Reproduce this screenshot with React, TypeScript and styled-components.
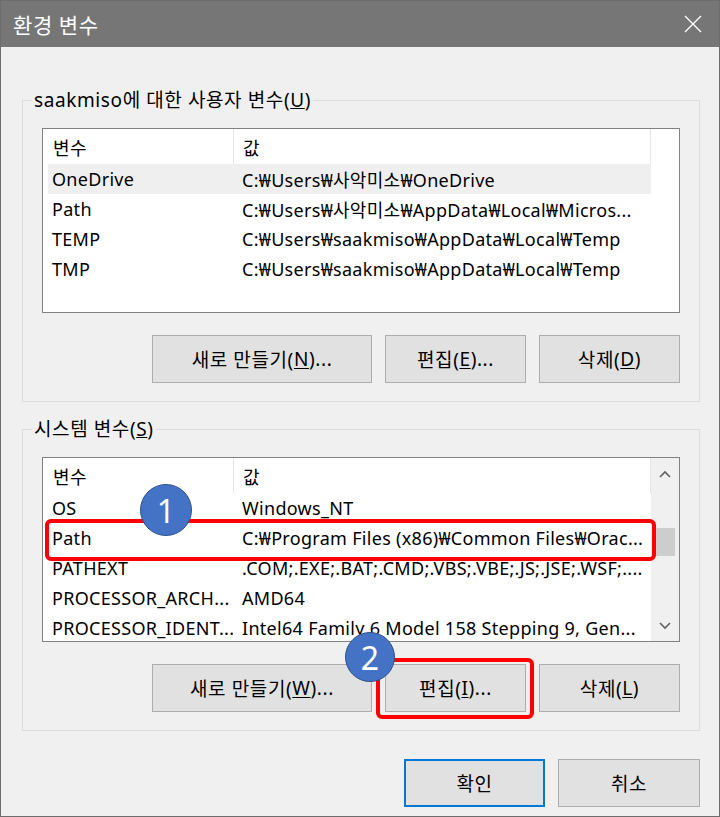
import React from 'react';
import styled, { createGlobalStyle } from 'styled-components';

const Global = createGlobalStyle`
  html, body { margin: 0; padding: 0; background: #f0f0f0; }
  body { font-family: "Noto Sans", "Noto Sans CJK KR", sans-serif; color: #000; }
  * { box-sizing: border-box; }
`;

const Window = styled.div`
  position: relative;
  width: 720px;
  height: 817px;
  background: #f0f0f0;
  border: 1px solid #6d6d6d;
  display: flex;
  flex-direction: column;
  overflow: hidden;
`;

const TitleBar = styled.div`
  height: 46px;
  flex: none;
  background: #767676;
  color: #fff;
  display: flex;
  align-items: center;
  justify-content: space-between;
  padding: 0 17px 0 12px;
  font-size: 21px;
  letter-spacing: 0.8px;
  font-family: "Noto Sans CJK KR", sans-serif;
`;

const Body = styled.div`
  display: flex;
  flex-direction: column;
  padding: 0 19px 0 21px;
`;

const Group = styled.fieldset<{ $top: number }>`
  margin: ${p => p.$top}px 0 0 0;
  padding: 16px 19px 18px 19px;
  border: 1px solid #dcdcdc;
  min-width: 0;
`;

const Legend = styled.legend`
  margin-left: -10px;
  padding: 0 2px;
  font-size: 19px;
  letter-spacing: 0.6px;
  line-height: 24px;
`;

const ListBox = styled.div`
  height: 185px;
  border: 1px solid #828282;
  background: #fff;
  display: flex;
  overflow: hidden;
`;

const ListMain = styled.div`
  width: 608px;
  flex: none;
  display: flex;
  flex-direction: column;
`;

const Header = styled.div`
  display: flex;
  height: 35px;
  flex: none;
`;

const HeaderCell = styled.div<{ $w: number; $pl: number }>`
  width: ${p => p.$w}px;
  padding-left: ${p => p.$pl}px;
  border-right: 1px solid #e5e5e5;
  display: flex;
  align-items: center;
  font-size: 18px;
  letter-spacing: 0.5px;
`;

const Row = styled.div<{ $sel?: boolean }>`
  display: flex;
  height: 30px;
  flex: none;
  margin-left: 5px;
  width: 603px;
  align-items: center;
  background: ${p => (p.$sel ? '#efefef' : 'transparent')};
  font-size: 18px;
  letter-spacing: 0.3px;
  white-space: nowrap;
`;

const NameCell = styled.div`
  width: 185px;
  padding-left: 4px;
  overflow: hidden;
  flex: none;
`;

const ValueCell = styled.div`
  padding-left: 9px;
  overflow: hidden;
  flex: 1;
`;

const ScrollBar = styled.div`
  flex: 1;
  background: #f0f0f0;
  display: flex;
  flex-direction: column;
  align-items: flex-start;
`;

const ArrowBox = styled.div`
  width: 100%;
  height: 31px;
  display: flex;
  align-items: center;
  justify-content: center;
  flex: none;
`;

const Track = styled.div`
  flex: 1;
  width: 100%;
  padding-top: 39px;
`;

const Thumb = styled.div`
  margin-left: 5px;
  width: 19px;
  height: 28px;
  background: #cdcdcd;
`;

const ButtonRow = styled.div<{ $mt: number }>`
  display: flex;
  justify-content: flex-end;
  gap: 13px;
  margin-top: ${p => p.$mt}px;
`;

const Button = styled.div<{ $w: number; $default?: boolean }>`
  width: ${p => p.$w}px;
  height: 48px;
  background: #e1e1e1;
  border: ${p => (p.$default ? '2px solid #0078d7' : '1px solid #adadad')};
  display: flex;
  align-items: center;
  justify-content: center;
  font-size: 19px;
  letter-spacing: 0.6px;
  color: #000;
  u { text-underline-offset: 2px; }
`;

const RedBox = styled.div<{ $x: number; $y: number; $w: number; $h: number }>`
  position: absolute;
  left: ${p => p.$x}px;
  top: ${p => p.$y}px;
  width: ${p => p.$w}px;
  height: ${p => p.$h}px;
  border: 4px solid #ff0000;
  border-radius: 6px;
`;

const Badge = styled.div<{ $x: number; $y: number; $d: number }>`
  position: absolute;
  left: ${p => p.$x}px;
  top: ${p => p.$y}px;
  width: ${p => p.$d}px;
  height: ${p => p.$d}px;
  border-radius: 50%;
  background: #4472c4;
  border: 1.5px solid #2f528f;
  color: #fff;
  font-size: 32px;
  display: flex;
  align-items: center;
  justify-content: center;
  font-family: "Noto Sans", sans-serif;
`;

const Chevron = ({ up }: { up?: boolean }) => (
  <svg width="12" height="8" viewBox="0 0 12 8">
    <path
      d={up ? 'M1 7 L6 2 L11 7' : 'M1 1 L6 6 L11 1'}
      fill="none"
      stroke="#606060"
      strokeWidth="1.6"
    />
  </svg>
);

type Item = { name: string; value: string; sel?: boolean };

const userVars: Item[] = [
  { name: 'OneDrive', value: 'C:₩Users₩사악미소₩OneDrive', sel: true },
  { name: 'Path', value: 'C:₩Users₩사악미소₩AppData₩Local₩Micros...' },
  { name: 'TEMP', value: 'C:₩Users₩saakmiso₩AppData₩Local₩Temp' },
  { name: 'TMP', value: 'C:₩Users₩saakmiso₩AppData₩Local₩Temp' },
];

const sysVars: Item[] = [
  { name: 'OS', value: 'Windows_NT' },
  { name: 'Path', value: 'C:₩Program Files (x86)₩Common Files₩Orac...' },
  { name: 'PATHEXT', value: '.COM;.EXE;.BAT;.CMD;.VBS;.VBE;.JS;.JSE;.WSF;....' },
  { name: 'PROCESSOR_ARCH...', value: 'AMD64' },
  { name: 'PROCESSOR_IDENT...', value: 'Intel64 Family 6 Model 158 Stepping 9, Gen...' },
];

const VarList = ({ items, scroll }: { items: Item[]; scroll?: boolean }) => (
  <ListBox>
    <ListMain>
      <Header>
        <HeaderCell $w={191} $pl={10}>변수</HeaderCell>
        <HeaderCell $w={417} $pl={9}>값</HeaderCell>
      </Header>
      {items.map(it => (
        <Row key={it.name} $sel={it.sel}>
          <NameCell>{it.name}</NameCell>
          <ValueCell>{it.value}</ValueCell>
        </Row>
      ))}
    </ListMain>
    {scroll && (
      <ScrollBar>
        <ArrowBox>
          <Chevron up />
        </ArrowBox>
        <Track>
          <Thumb />
        </Track>
        <ArrowBox>
          <Chevron />
        </ArrowBox>
      </ScrollBar>
    )}
  </ListBox>
);

export default function App() {
  return (
    <>
      <Global />
      <Window>
        <TitleBar>
          <span>환경 변수</span>
          <svg width="18" height="18" viewBox="0 0 18 18">
            <path d="M1 1 L17 17 M17 1 L1 17" stroke="#fff" strokeWidth="1.3" />
          </svg>
        </TitleBar>
        <Body>
          <Group $top={41}>
            <Legend>
              saakmiso에 대한 사용자 변수(<u>U</u>)
            </Legend>
            <VarList items={userVars} />
            <ButtonRow $mt={22}>
              <Button $w={220}>
                새로 만들기(<u>N</u>)...
              </Button>
              <Button $w={141}>
                편집(<u>E</u>)...
              </Button>
              <Button $w={141}>
                삭제(<u>D</u>)
              </Button>
            </ButtonRow>
          </Group>
          <Group $top={15}>
            <Legend>
              시스템 변수(<u>S</u>)
            </Legend>
            <VarList items={sysVars} scroll />
            <ButtonRow $mt={22}>
              <Button $w={220}>
                새로 만들기(<u>W</u>)...
              </Button>
              <Button $w={141}>
                편집(<u>I</u>)...
              </Button>
              <Button $w={141}>
                삭제(<u>L</u>)
              </Button>
            </ButtonRow>
          </Group>
          <ButtonRow $mt={28}>
            <Button $w={141} $default>
              확인
            </Button>
            <Button $w={142}>취소</Button>
          </ButtonRow>
        </Body>
        <RedBox $x={44} $y={518} $w={611} $h={42} />
        <Badge $x={139} $y={483} $d={52}>
          1
        </Badge>
        <RedBox $x={375} $y={657} $w={158} $h={61} />
        <Badge $x={344} $y={631} $d={50}>
          2
        </Badge>
      </Window>
    </>
  );
}
